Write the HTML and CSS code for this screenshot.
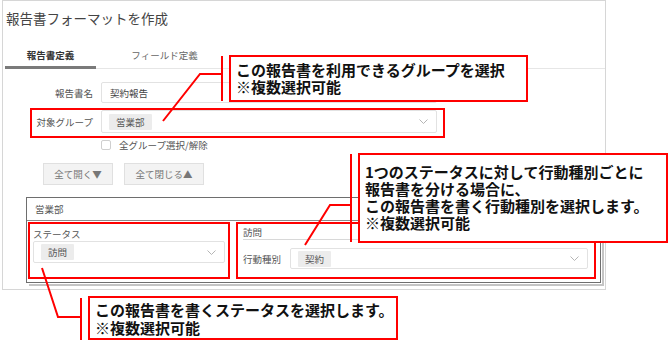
FILE: index.html
```html
<!DOCTYPE html>
<html lang="ja">
<head>
    <meta charset="UTF-8">
    <title>報告書フォーマットを作成</title>
    <link rel="stylesheet" href="styles.css">
</head>
<body>
<div class="page">
    <div class="panel">
        <h1 class="title">報告書フォーマットを作成</h1>
        <div class="tabs">
            <div class="tab active">報告書定義</div>
            <div class="tab">フィールド定義</div>
        </div>
        <div class="row first">
            <label class="lbl">報告書名</label>
            <div class="field text">契約報告</div>
        </div>
        <div class="row second">
            <label class="lbl">対象グループ</label>
            <div class="field select">
                <span class="tag">営業部</span>
                <svg class="chev" width="9" height="5" viewBox="0 0 9 5"><polyline points="0.5,0.5 4.5,4.5 8.5,0.5" fill="none" stroke="#b5b5b5" stroke-width="1"/></svg>
            </div>
        </div>
        <div class="check">
            <span class="box"></span>
            <span>全グループ選択/解除</span>
        </div>
        <div class="buttons">
            <div class="btn wide1">全て開く▼</div>
            <div class="btn wide2">全て閉じる▲</div>
        </div>
        <div class="group">
            <div class="group-head">営業部</div>
            <div class="group-body">
                <div class="col left">
                    <div class="col-lbl">ステータス</div>
                    <div class="field select small">
                        <span class="tag">訪問</span>
                        <svg class="chev" width="9" height="5" viewBox="0 0 9 5"><polyline points="0.5,0.5 4.5,4.5 8.5,0.5" fill="none" stroke="#b5b5b5" stroke-width="1"/></svg>
                    </div>
                </div>
                <div class="col right">
                    <div class="sub-head">訪問</div>
                    <div class="kind">
                        <span class="kind-lbl">行動種別</span>
                        <div class="field select small grow">
                            <span class="tag">契約</span>
                            <svg class="chev" width="9" height="5" viewBox="0 0 9 5"><polyline points="0.5,0.5 4.5,4.5 8.5,0.5" fill="none" stroke="#b5b5b5" stroke-width="1"/></svg>
                        </div>
                    </div>
                </div>
            </div>
        </div>
    </div>

    <div class="frame f1"></div>
    <div class="frame f2"></div>
    <div class="frame f3"></div>

    <svg class="leaders" width="670" height="346" viewBox="0 0 670 346">
        <g fill="none" stroke="#f00" stroke-width="2">
            <polyline points="163,121 200,74 222,74"/>
            <line x1="222" y1="56" x2="222" y2="101"/>
            <polyline points="305,245 330,205 351,205"/>
            <line x1="351" y1="154" x2="351" y2="242"/>
            <polyline points="42,268 58,317 81,317"/>
            <line x1="81" y1="298" x2="81" y2="340"/>
        </g>
    </svg>

    <div class="note n1">この報告書を利用できるグループを選択<br>※複数選択可能</div>
    <div class="note n2">1つのステータスに対して行動種別ごとに<br>報告書を分ける場合に、<br>この報告書を書く行動種別を選択します。<br>※複数選択可能</div>
    <div class="note n3">この報告書を書くステータスを選択します。<br>※複数選択可能</div>
</div>
</body>
</html>
```

FILE: styles.css
```css
*{
    box-sizing: border-box;
    margin: 0;
    padding: 0;
}
body{
    background: #fff;
    font-family: "Noto Sans CJK JP", "Noto Sans", sans-serif;
    color: #555;
}
.page{
    position: relative;
    width: 670px;
    height: 346px;
    overflow: hidden;
}
.panel{
    margin-left: 2px;
    width: 604px;
    height: 290px;
    border: 1px solid #d6d6d6;
}
.title{
    font-size: 13.5px;
    font-weight: 400;
    line-height: 18px;
    color: #444;
    padding: 8px 0 0 3px;
    height: 37px;
}
.tabs{
    display: flex;
    margin-left: 2px;
    border-bottom: 1px solid #e6e6e6;
}
.tab{
    font-size: 9.5px;
    line-height: 12px;
    padding: 11px 0 5px;
    text-align: center;
    color: #666;
    width: 137px;
}
.tab.active{
    width: 91px;
    color: #333;
    font-weight: 700;
    border-bottom: 3px solid #7a7a7a;
    margin-bottom: -1px;
}
.row{
    display: flex;
    align-items: center;
    padding-left: 27px;
}
.row.first{
    margin-top: 13px;
}
.row.second{
    margin-top: 7px;
}
.lbl{
    width: 63px;
    margin-right: 8px;
    text-align: right;
    font-size: 9.5px;
    color: #555;
}
.field{
    width: 336px;
    border: 1px solid #e2e2e2;
    border-radius: 2px;
    font-size: 9.5px;
    display: flex;
    align-items: center;
}
.field.text{
    height: 21px;
    padding-left: 8px;
    color: #444;
}
.field.select{
    height: 23px;
    padding: 0 8px 0 7px;
}
.field.small{
    width: 192px;
    height: 22px;
}
.field.grow{
    width: 298px;
    height: 21px;
}
.tag{
    background: #ececec;
    color: #555;
    padding: 0 7px;
    line-height: 16px;
    border-radius: 1px;
}
.chev{
    margin-left: auto;
}
.check{
    display: flex;
    align-items: center;
    margin: 5px 0 0 98px;
    font-size: 9.5px;
    color: #555;
}
.box{
    width: 10px;
    height: 10px;
    border: 1px solid #cfcfcf;
    border-radius: 2px;
    margin-right: 8px;
}
.buttons{
    display: flex;
    gap: 11px;
    margin: 11px 0 0 40px;
}
.btn{
    height: 22px;
    line-height: 20px;
    background: #f3f3f3;
    border: 1px solid #e0e0e0;
    font-size: 9.5px;
    color: #777;
    text-align: center;
}
.wide1{
    width: 70px;
}
.wide2{
    width: 80px;
}
.group{
    margin: 12px 0 0 23px;
    width: 575px;
    height: 86px;
    border: 1px solid #6e6e6e;
    box-shadow: 1px 1px 0 #fff, 3px 3px 0 #c4c4c4;
}
.group-head{
    height: 23px;
    line-height: 22px;
    padding-left: 8px;
    font-size: 9.5px;
    color: #555;
    border-bottom: 1px solid #8a8a8a;
}
.group-body{
    display: flex;
    gap: 18px;
    padding-left: 6px;
}
.col-lbl{
    font-size: 9.5px;
    line-height: 12px;
    margin: 7px 0 1px;
    color: #555;
}
.col.right{
    width: 345px;
}
.sub-head{
    font-size: 9.5px;
    line-height: 12px;
    margin-top: 5px;
    padding-bottom: 1px;
    border-bottom: 1px solid #d8d8d8;
    color: #555;
}
.kind{
    display: flex;
    align-items: center;
    margin-top: 8px;
}
.kind-lbl{
    width: 47px;
    font-size: 9.5px;
    color: #555;
}
.frame{
    position: absolute;
    border: 2px solid #f00;
}
.f1{
    left: 30px;
    top: 108px;
    width: 415px;
    height: 30px;
}
.f2{
    left: 28px;
    top: 222px;
    width: 202px;
    height: 57px;
}
.f3{
    left: 236px;
    top: 222px;
    width: 360px;
    height: 57px;
}
.leaders{
    position: absolute;
    left: 0;
    top: 0;
}
.note{
    position: absolute;
    background: #fff;
    border: 2px solid #f00;
    font-size: 15px;
    font-weight: 700;
    line-height: 17px;
    color: #111;
    padding-left: 5px;
    white-space: nowrap;
}
.n1{
    left: 229px;
    top: 55px;
    width: 299px;
    height: 47px;
    padding-top: 4px;
}
.n2{
    left: 358px;
    top: 153px;
    width: 310px;
    height: 90px;
    padding-top: 8px;
}
.n3{
    left: 88px;
    top: 296px;
    width: 310px;
    height: 44px;
    padding-top: 3px;
    line-height: 18px;
}
```
